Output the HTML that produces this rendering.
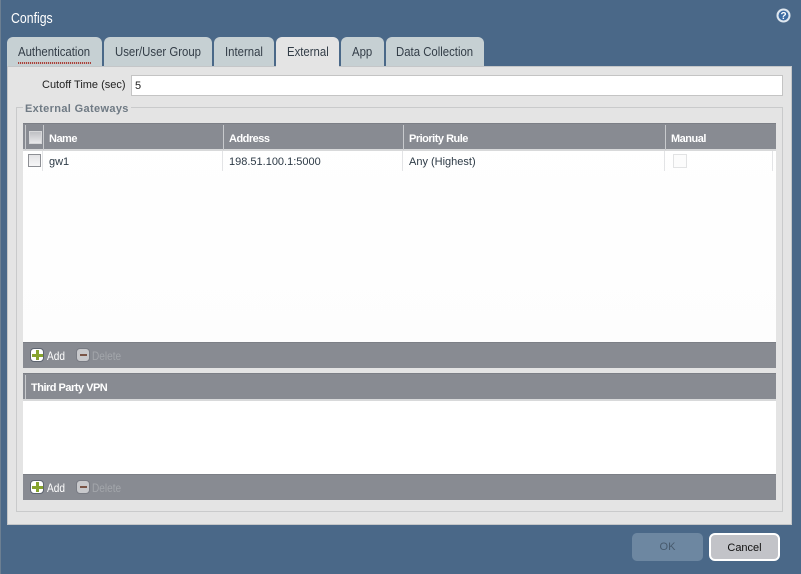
<!DOCTYPE html>
<html><head><meta charset="utf-8">
<style>
html,body{margin:0;padding:0}
body{width:801px;height:574px;position:relative;overflow:hidden;background:#4a6888;font-family:"Liberation Sans",sans-serif;font-size:11px;color:#222}
div,span{position:absolute;box-sizing:border-box;white-space:nowrap}
.tab{top:37px;height:29px;background:#c6d0d3;border-radius:6px 6px 0 0}
.tt{top:44px;font-size:13px;line-height:16px;color:#333d47;transform:scaleX(.875);transform-origin:0 0;z-index:4}
.hd{background:#888b92;color:#fff;font-weight:bold;font-size:11px}
.ht{top:133px;line-height:13px;background:none;color:#fff;font-weight:bold;font-size:11px;letter-spacing:-.5px}
.tb{left:23px;width:753px;height:26px;background:#888b92;border-top:1px solid #7c7f86}
.sep{width:1px;background:#c8cacd}
.cell{top:156px;font-size:11px;line-height:13px;color:#2d3a46}
.csep{top:151px;height:20px;width:1px;background:#e3e4e6}
.cb{width:13px;height:13px;background:linear-gradient(#e4e4e6,#f6f6f7);border:1px solid #8d8f94}
.ico{width:14px;height:14px;border-radius:4px}
.lbl{font-size:12px;line-height:14px;transform:scaleX(.84);transform-origin:0 0}
</style></head><body>
<div style="left:0;top:0;width:1px;height:574px;background:#6c7f92"></div>
<div style="left:11px;top:10px;font-size:15px;line-height:18px;color:#fff;transform:scaleX(.82);transform-origin:0 0">Configs</div>
<svg style="position:absolute;left:776px;top:8px" width="15" height="15" viewBox="0 0 15 15"><circle cx="7.5" cy="7.5" r="7" fill="#dfe7ef"/><circle cx="7.5" cy="7.5" r="5" fill="#3f6da3"/><text x="7.5" y="11" font-family="Liberation Sans" font-size="10" font-weight="bold" fill="#fff" text-anchor="middle">?</text></svg>

<div class="tab" style="left:7px;width:95px"></div>
<div class="tt" style="left:18px">Authentication</div>
<div style="left:18px;top:62px;width:73px;height:2px;background:repeating-linear-gradient(90deg,#a8423c 0 1px,#c9b8b4 1px 2px)"></div>
<div class="tab" style="left:104px;width:108px"></div>
<div class="tt" style="left:115px">User/User Group</div>
<div class="tab" style="left:214px;width:60px"></div>
<div class="tt" style="left:225px">Internal</div>
<div class="tab" style="left:276px;width:63px;background:#e4e4e4;height:31px;z-index:3"></div>
<div class="tt" style="left:287px">External</div>
<div class="tab" style="left:341px;width:43px"></div>
<div class="tt" style="left:352px">App</div>
<div class="tab" style="left:386px;width:98px"></div>
<div class="tt" style="left:396px">Data Collection</div>

<div style="left:7px;top:66px;width:785px;height:459px;background:#e4e4e4;border:1px solid #c4c6c8"></div>
<div style="left:42px;top:79px;font-size:11px;line-height:13px;color:#222">Cutoff Time (sec)</div>
<div style="left:131px;top:75px;width:652px;height:21px;background:#fff;border:1px solid #c4c4c4;font-size:11px;line-height:21px;padding-left:3px;color:#222">5</div>

<div style="left:16px;top:107px;width:767px;height:405px;border:1px solid #c9cacb"></div>
<div style="left:23px;top:102px;background:#e4e4e4;padding:0 2px;font-weight:bold;font-size:11px;line-height:14px;color:#6f7a84;letter-spacing:.35px">External Gateways</div>

<div style="left:23px;top:124px;width:753px;height:218px;background:linear-gradient(#fff,#fdfdfd)"></div>
<div class="hd" style="left:23px;top:123px;width:753px;height:28px;border-top:1px solid #7c7f86;border-bottom:2px solid #d8d9da"></div>
<div class="sep" style="left:25px;top:125px;height:25px"></div>
<div class="sep" style="left:43px;top:125px;height:25px"></div>
<div class="sep" style="left:223px;top:125px;height:25px"></div>
<div class="sep" style="left:403px;top:125px;height:25px"></div>
<div class="sep" style="left:665px;top:125px;height:25px"></div>
<div class="cb" style="left:29px;top:131px;border-color:#d6d7d9;background:linear-gradient(#bfc0c4,#e8e8ea)"></div>
<div class="ht" style="left:49px">Name</div>
<div class="ht" style="left:229px">Address</div>
<div class="ht" style="left:409px">Priority Rule</div>
<div class="ht" style="left:671px">Manual</div>

<div class="csep" style="left:42px"></div>
<div class="csep" style="left:222px"></div>
<div class="csep" style="left:402px"></div>
<div class="csep" style="left:664px"></div>
<div class="csep" style="left:772px"></div>
<div class="cb" style="left:28px;top:154px"></div>
<div class="cell" style="left:49px">gw1</div>
<div class="cell" style="left:229px">198.51.100.1:5000</div>
<div class="cell" style="left:409px">Any (Highest)</div>
<div style="left:673px;top:154px;width:14px;height:14px;border:1px solid #e2e3e4;background:#fcfcfc"></div>

<div class="tb" style="top:342px"></div>
<div class="ico" style="left:30px;top:348px;background:#fff;border:1px solid #5d6470"><span style="left:5px;top:1px;width:3px;height:10px;background:#86a32e"></span><span style="left:1px;top:5px;width:11px;height:3px;background:#86a32e"></span></div>
<div class="lbl" style="left:47px;top:349px;color:#fff">Add</div>
<div class="ico" style="left:76px;top:348px;background:#c8c9cc;border:1px solid #797c84"><span style="left:3px;top:5px;width:7px;height:2px;background:#7a5547"></span></div>
<div class="lbl" style="left:92px;top:349px;color:#a3a6ab">Delete</div>

<div style="left:23px;top:401px;width:753px;height:73px;background:#fff"></div>
<div class="hd" style="left:23px;top:373px;width:753px;height:28px;border-top:1px solid #7c7f86;border-bottom:2px solid #d8d9da"></div>
<div class="sep" style="left:25px;top:375px;height:24px"></div>
<div class="ht" style="left:31px;top:382px">Third Party VPN</div>

<div class="tb" style="top:474px"></div>
<div class="ico" style="left:30px;top:480px;background:#fff;border:1px solid #5d6470"><span style="left:5px;top:1px;width:3px;height:10px;background:#86a32e"></span><span style="left:1px;top:5px;width:11px;height:3px;background:#86a32e"></span></div>
<div class="lbl" style="left:47px;top:481px;color:#fff">Add</div>
<div class="ico" style="left:76px;top:480px;background:#c8c9cc;border:1px solid #797c84"><span style="left:3px;top:5px;width:7px;height:2px;background:#7a5547"></span></div>
<div class="lbl" style="left:92px;top:481px;color:#a3a6ab">Delete</div>

<div style="left:632px;top:533px;width:71px;height:28px;background:#6d87a1;border-radius:5px;text-align:center;line-height:29px;font-size:11px;color:#475a6d">OK</div>
<div style="left:709px;top:533px;width:71px;height:28px;background:#c2c3c8;border:2px solid #fff;border-radius:6px;text-align:center;line-height:26px;font-size:11px;color:#111">Cancel</div>
</body></html>
